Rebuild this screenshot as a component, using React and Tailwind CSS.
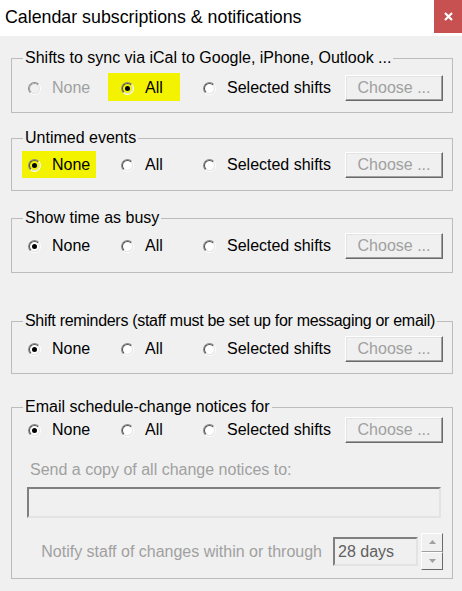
import React from 'react';

const groups = [
  {
    title: 'Shifts to sync via iCal to Google, iPhone, Outlook ...',
    selected: 'all',
    noneDisabled: true,
    highlight: 'all',
    box: 'mt-[13px] h-[64px]',
    row: 'mt-[8px]',
  },
  {
    title: 'Untimed events',
    selected: 'none',
    highlight: 'none',
    box: 'mt-[16px] h-[62px]',
    row: 'mt-[5px]',
  },
  {
    title: 'Show time as busy',
    selected: 'none',
    box: 'mt-[18px] h-[64px]',
    row: 'mt-[6px]',
  },
  {
    title: 'Shift reminders (staff must be set up for messaging or email)',
    selected: 'none',
    tight: true,
    box: 'mt-[39px] h-[62px]',
    row: 'mt-[6px]',
  },
];

const Radio = ({ checked, disabled, hl }) => (
  <span className="relative inline-block w-[13px] h-[13px] shrink-0 rounded-full border border-t-[#8a8a8a] border-l-[#8a8a8a] border-r-white border-b-white">
    <span
      className={
        hl
          ? 'flex items-center justify-center w-full h-full rounded-full border border-t-[#505050] border-l-[#505050] border-r-[#e3e3e3] border-b-[#e3e3e3] bg-[#f3f300]'
          : disabled
          ? 'flex items-center justify-center w-full h-full rounded-full border border-t-[#a0a0a0] border-l-[#a0a0a0] border-r-[#e3e3e3] border-b-[#e3e3e3] bg-[#f0f0f0]'
          : 'flex items-center justify-center w-full h-full rounded-full border border-t-[#505050] border-l-[#505050] border-r-[#e3e3e3] border-b-[#e3e3e3] bg-white'
      }
    >
      {checked && <span className="block w-[5px] h-[5px] rounded-full bg-black" />}
    </span>
  </span>
);

const Option = ({ label, checked, disabled, hl, hlBox, width }) => (
  <label className={`relative flex items-center h-[26px] ${width}`}>
    {hl && <span className={`absolute bg-[#f3f300] ${hlBox}`} />}
    <Radio checked={checked} disabled={disabled} hl={hl} />
    <span className={disabled ? 'relative ml-[11px] text-[#a0a0a0]' : 'relative ml-[11px] text-black'}>
      {label}
    </span>
  </label>
);

const ChooseButton = () => (
  <div className="flex items-center justify-center w-[98px] h-[26px] border border-t-white border-l-white border-r-[#696969] border-b-[#696969] shadow-[inset_-1px_-1px_0_#a0a0a0,inset_1px_1px_0_#e3e3e3] text-[#a0a0a0]">
    Choose ...
  </div>
);

const OptionRow = ({ g, className }) => (
  <div className={`flex items-center pl-[16px] ${className}`}>
    <Option
      label="None"
      width="w-[93px]"
      checked={g.selected === 'none'}
      disabled={g.noneDisabled}
      hl={g.highlight === 'none'}
      hlBox="left-[-6px] top-[-1px] w-[74px] h-[27px]"
    />
    <Option
      label="All"
      width="w-[82px]"
      checked={g.selected === 'all'}
      hl={g.highlight === 'all'}
      hlBox="left-[-13px] top-[-2px] w-[72px] h-[28px]"
    />
    <Option label="Selected shifts" width="w-[142px]" checked={false} />
    <ChooseButton />
  </div>
);

const Group = ({ title, tight, className, children }) => (
  <fieldset className={`ml-[11px] w-[442px] border border-[#bcbcbc] ${className}`}>
    <legend
      className={
        tight
          ? 'ml-[11px] px-[2px] leading-[18px] whitespace-nowrap tracking-[-0.3px] text-black'
          : 'ml-[11px] px-[2px] leading-[18px] whitespace-nowrap text-black'
      }
    >
      {title}
    </legend>
    {children}
  </fieldset>
);

const SpinButtons = () => (
  <div className="flex flex-col w-[22px] h-[37px] ml-[3px]">
    <div className="flex-1 flex items-center justify-center border border-t-white border-l-white border-r-[#696969] border-b-[#a0a0a0]">
      <svg width="7" height="4" viewBox="0 0 7 4">
        <path d="M0 4 L3.5 0 L7 4 Z" fill="#a0a0a0" />
      </svg>
    </div>
    <div className="flex-1 flex items-center justify-center border border-t-white border-l-white border-r-[#696969] border-b-[#696969]">
      <svg width="7" height="4" viewBox="0 0 7 4">
        <path d="M0 0 L7 0 L3.5 4 Z" fill="#a0a0a0" />
      </svg>
    </div>
  </div>
);

export default function App() {
  return (
    <div className="h-[591px] overflow-hidden bg-[#f0f0f0] font-['Liberation_Sans',Arial,sans-serif] text-[16px]">
      <div className="flex items-center justify-between h-[36px] bg-white">
        <div className="pl-[5px] pb-[2px] text-[17.8px] text-black">
          Calendar subscriptions &amp; notifications
        </div>
        <div className="flex items-center justify-center self-start w-[28px] h-[33px] bg-[#c75050]">
          <svg width="9" height="9" viewBox="0 0 9 9">
            <path d="M1 1 L8 8 M8 1 L1 8" stroke="#fff" strokeWidth="2.2" />
          </svg>
        </div>
      </div>

      {groups.map((g) => (
        <Group key={g.title} title={g.title} tight={g.tight} className={g.box}>
          <OptionRow g={g} className={g.row} />
        </Group>
      ))}

      <Group title="Email schedule-change notices for" className="mt-[24px] h-[181px]">
        <OptionRow g={{ selected: 'none' }} className="mt-[1px]" />
        <div className="mt-[18px] pl-[18px] leading-[18px] text-[#a0a0a0]">
          Send a copy of all change notices to:
        </div>
        <div className="mt-[8px] ml-[15px] w-[414px] h-[31px] border-2 border-t-[#808080] border-l-[#808080] border-r-[#e3e3e3] border-b-[#e3e3e3] bg-[#f0f0f0]" />
        <div className="flex items-center justify-end mt-[15px] pr-[9px]">
          <span className="text-[#a0a0a0] mr-[11px]">Notify staff of changes within or through</span>
          <div className="flex items-center w-[85px] h-[29px] pl-[3px] border-2 border-t-[#808080] border-l-[#808080] border-r-[#e3e3e3] border-b-[#e3e3e3] bg-[#f0f0f0] text-[#606060]">
            28 days
          </div>
          <SpinButtons />
        </div>
      </Group>
    </div>
  );
}
